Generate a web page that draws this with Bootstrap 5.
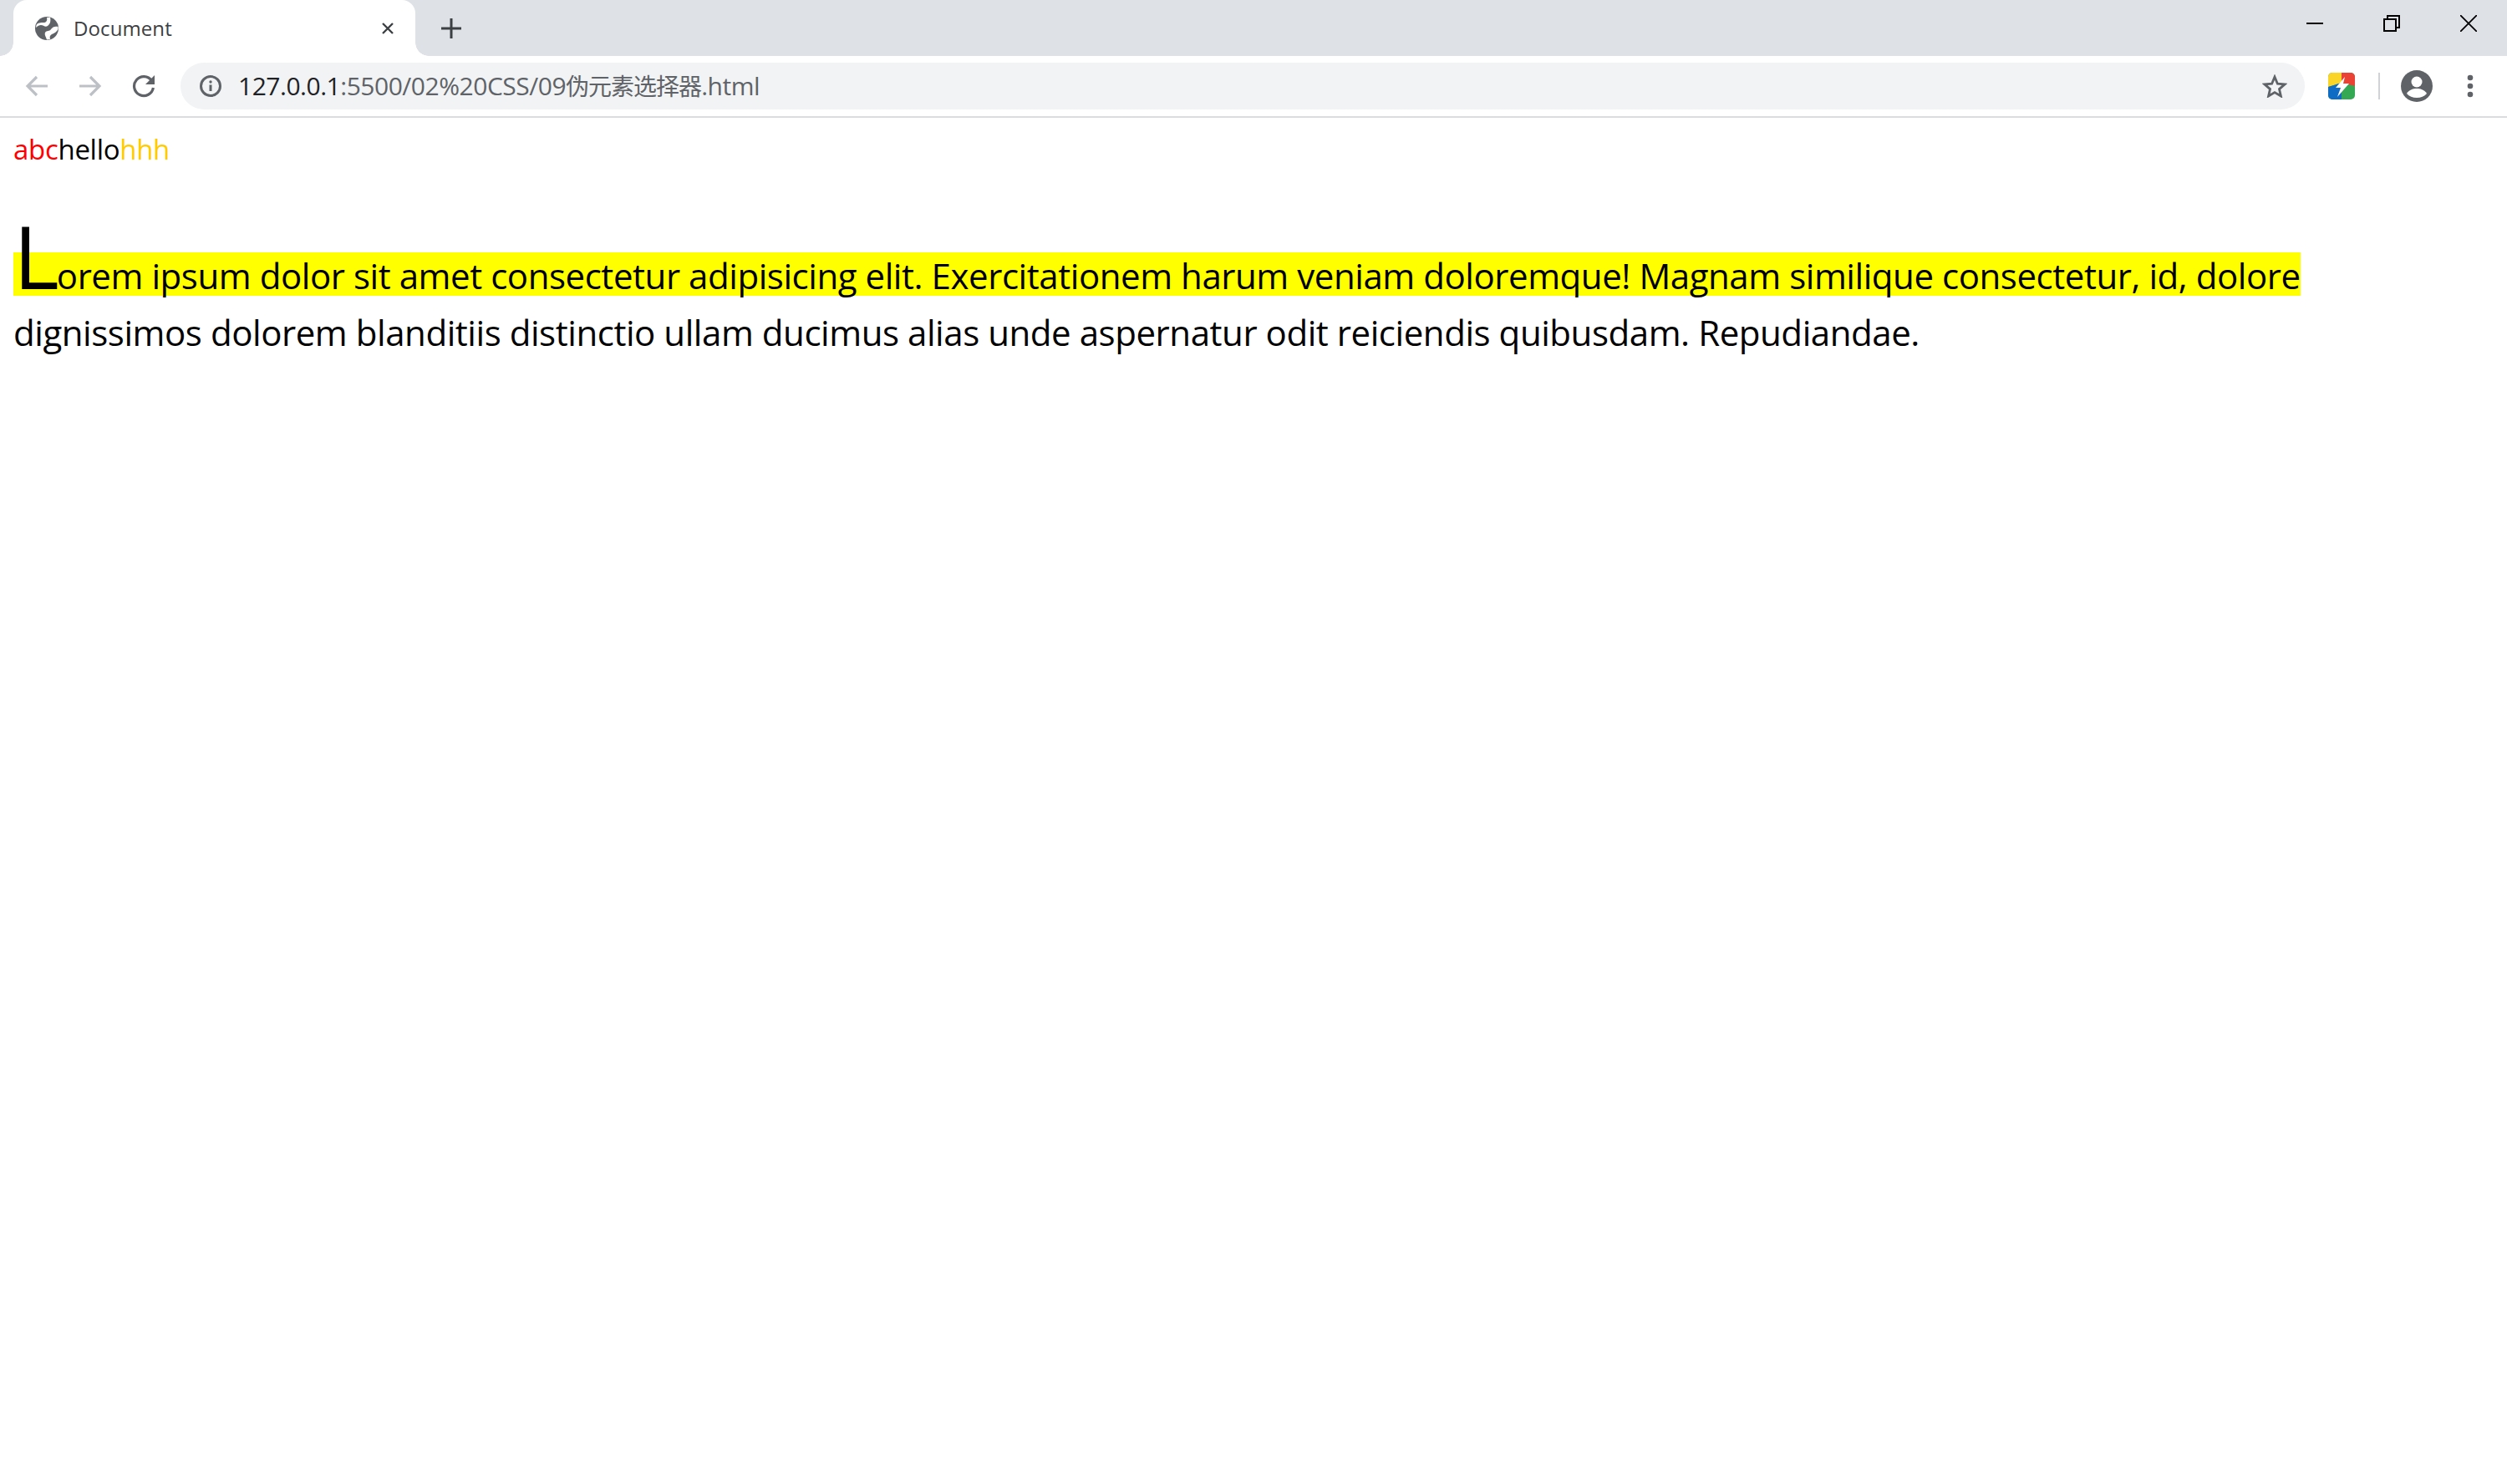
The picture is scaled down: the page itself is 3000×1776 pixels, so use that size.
<!DOCTYPE html>
<html lang="zh">
<head>
<meta charset="utf-8">
<title>Document</title>
<link rel="stylesheet" href="https://cdn.jsdelivr.net/npm/bootstrap@5.3.0/dist/css/bootstrap.min.css">
<style>
html,body{height:100%;}
body{background:#fff;color:#000;font-family:"Open Sans","Noto Sans CJK SC",sans-serif;overflow:hidden;}
svg{display:block;flex:none;}
.tab-strip{height:67px;background:#dee1e6;padding-left:16px;}
.chrome-tab{position:relative;width:481px;height:67px;background:#fff;border-radius:16px 16px 0 0;padding-left:26px;}
.chrome-tab::before,.chrome-tab::after{content:"";position:absolute;bottom:0;width:16px;height:16px;}
.chrome-tab::before{left:-16px;background:radial-gradient(circle at 0 0,transparent 15.5px,#fff 16px);}
.chrome-tab::after{right:-16px;background:radial-gradient(circle at 100% 0,transparent 15.5px,#fff 16px);}
.tab-title{margin-left:18px;font:24px/1 "Open Sans",sans-serif;color:#3c4043;letter-spacing:.1px;}
.tab-x{margin-left:auto;margin-right:24px;}
.tab-new{margin-left:31px;}
.win-btn{width:92px;height:56px;}
.tool-strip{height:74px;border-bottom:2px solid #dadce0;padding-left:12px;}
.tool-slot{width:64px;height:64px;}
.omni{height:56px;margin-left:12px;border-radius:28px;background:#f1f3f4;padding-left:23px;padding-right:21px;}
.omni-url{margin-left:20px;font:30px/1 "Open Sans","Noto Sans CJK SC",sans-serif;color:#5f6368;white-space:nowrap;letter-spacing:-.48px;}
.omni-url b{font-weight:400;color:#202124;}
.omni-cjk{font-size:28px;letter-spacing:-1px;}
.tool-ext{margin-left:28px;}
.tool-sep{width:2px;height:32px;background:#d0d2d5;margin-left:28px;}
.tool-avatar{margin-left:25px;}
.tool-dots{margin-left:41px;margin-right:40px;}
.page-body{padding:0 16px;}
.line-one{font-size:33px;line-height:48px;letter-spacing:-.3px;margin:14px 0 0;}
.c-red{color:#f00;}
.c-gold{color:#fc0;}
.lorem{font-size:42px;line-height:68px;letter-spacing:-.44px;margin:69px 0 0;}
.lorem::first-letter{font-size:105px;letter-spacing:-3px;}
.lorem::first-line{background:linear-gradient(transparent 1px,#ff0 1px,#ff0 53px,transparent 53px);}
</style>
</head>
<body>
<div class="tab-strip d-flex align-items-start">
  <div class="chrome-tab d-flex align-items-center">
    <svg width="28" height="28" viewBox="0 0 28 28"><circle cx="14" cy="14" r="14" fill="#5f6368"/><path d="M1.5 10C3 7 7 7 10 7C13 7 15 5 14 1L18 .8C19 5 18 9 15 11C12 13 10 10 7 10C5 10 3 11 1 13Z M27.5 12C24 11 21 12 19 15C17 18 14 16 12 19C11 22 13 24 14 27.5L18 27C17 24 18 22 20 21C23 20 26 18 27.5 15Z" fill="#fff"/></svg>
    <span class="tab-title">Document</span>
    <svg class="tab-x" width="18" height="18" viewBox="0 0 18 18"><path d="M3 3 15 15M15 3 3 15" stroke="#3c4043" stroke-width="2.4"/></svg>
  </div>
  <svg class="tab-new align-self-center" width="24" height="24" viewBox="0 0 24 24"><path d="M12 0V24M0 12H24" stroke="#3c4043" stroke-width="3"/></svg>
  <div class="d-flex ms-auto">
    <div class="win-btn d-flex align-items-center justify-content-center"><svg width="20" height="20" viewBox="0 0 20 20"><path d="M0 10H20" stroke="#000" stroke-width="2"/></svg></div>
    <div class="win-btn d-flex align-items-center justify-content-center"><svg width="20" height="20" viewBox="0 0 20 20"><path d="M1 5H15V19H1ZM5 5V1H19V15H15" fill="none" stroke="#000" stroke-width="2"/></svg></div>
    <div class="win-btn d-flex align-items-center justify-content-center"><svg width="20" height="20" viewBox="0 0 20 20"><path d="M0 0 20 20M20 0 0 20" stroke="#000" stroke-width="1.8"/></svg></div>
  </div>
</div>
<div class="tool-strip d-flex align-items-center">
  <div class="tool-slot d-flex align-items-center justify-content-center"><svg width="28" height="26" viewBox="0 0 28 26"><path d="M27 13H3M14 2 3 13 14 24" fill="none" stroke="#bdc1c6" stroke-width="3.2"/></svg></div>
  <div class="tool-slot d-flex align-items-center justify-content-center"><svg width="28" height="26" viewBox="0 0 28 26"><path d="M1 13H25M14 2 25 13 14 24" fill="none" stroke="#bdc1c6" stroke-width="3.2"/></svg></div>
  <div class="tool-slot d-flex align-items-center justify-content-center"><svg width="28" height="28" viewBox="0 0 28 28"><path d="M23.5 7.5A11.5 11.5 0 1 0 25.4 16" fill="none" stroke="#5f6368" stroke-width="3.2"/><path d="M27 1V12H16Z" fill="#5f6368"/></svg></div>
  <div class="omni flex-grow-1 d-flex align-items-center">
    <svg width="26" height="26" viewBox="0 0 26 26"><circle cx="13" cy="13" r="11.5" fill="none" stroke="#5f6368" stroke-width="3"/><path d="M13 11.5V19" stroke="#5f6368" stroke-width="3"/><circle cx="13" cy="8" r="1.7" fill="#5f6368"/></svg>
    <span class="omni-url"><b>127.0.0.1</b>:5500/02%20CSS/09<span class="omni-cjk">伪元素选择器</span>.html</span>
    <svg class="ms-auto" width="30" height="28" viewBox="0 0 30 28"><path d="M15 3 18.4 11.2 27 11.9 20.5 17.6 22.4 26 15 21.6 7.6 26 9.5 17.6 3 11.9 11.6 11.2Z" fill="none" stroke="#5f6368" stroke-width="2.8" stroke-linejoin="miter"/></svg>
  </div>
  <svg class="tool-ext" width="32" height="32" viewBox="0 0 32 32"><defs><clipPath id="extclip"><rect width="32" height="32" rx="5"/></clipPath></defs><g clip-path="url(#extclip)"><rect width="32" height="32" fill="#34a853"/><path d="M0 0H16V12L0 17Z" fill="#fbd428"/><path d="M16 0H32V16L16 12Z" fill="#ea4335"/><path d="M0 17 16 12V32H0Z" fill="#0f6cc4"/></g><path d="M20 5 9 18H15L11 29 25 13H18Z" fill="#fff"/></svg>
  <div class="tool-sep"></div>
  <svg class="tool-avatar" width="38" height="38" viewBox="0 0 38 38"><circle cx="19" cy="19" r="19" fill="#5f6368"/><circle cx="19" cy="14" r="6.5" fill="#fff"/><path d="M7 28C10 23 15 22 19 22S28 23 31 28C28 31.5 24 33 19 33S10 31.5 7 28Z" fill="#fff"/></svg>
  <svg class="tool-dots" width="8" height="28" viewBox="0 0 8 28"><circle cx="4" cy="4" r="3.3" fill="#5f6368"/><circle cx="4" cy="14" r="3.3" fill="#5f6368"/><circle cx="4" cy="24" r="3.3" fill="#5f6368"/></svg>
</div>
<div class="page-body">
  <p class="line-one"><span class="c-red">abc</span>hello<span class="c-gold">hhh</span></p>
  <p class="lorem">Lorem ipsum dolor sit amet consectetur adipisicing elit. Exercitationem harum veniam doloremque! Magnam similique consectetur, id, dolore<br>dignissimos dolorem blanditiis distinctio ullam ducimus alias unde aspernatur odit reiciendis quibusdam. Repudiandae.</p>
</div>
<script src="https://cdn.jsdelivr.net/npm/bootstrap@5.3.0/dist/js/bootstrap.bundle.min.js"></script>
</body>
</html>
